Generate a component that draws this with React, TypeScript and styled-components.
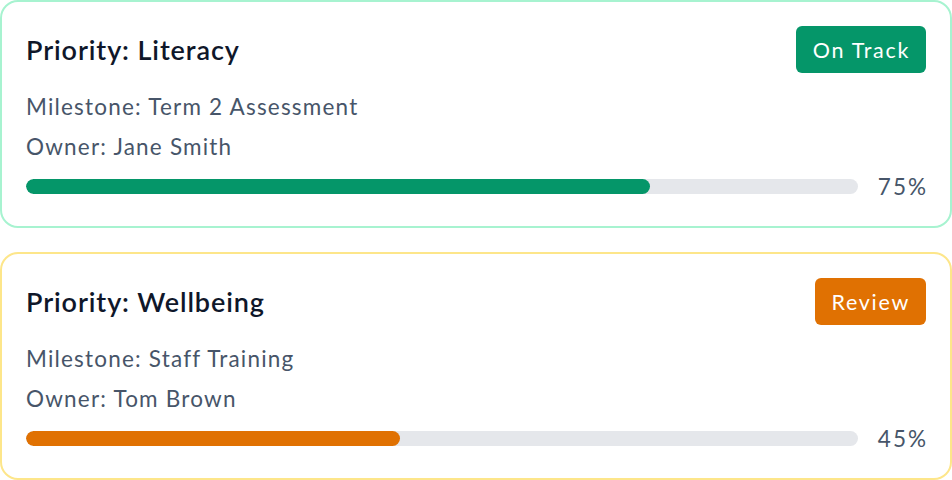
import React from "react";
import styled, { createGlobalStyle } from "styled-components";

const GlobalStyle = createGlobalStyle`
  html, body { margin: 0; padding: 0; background: #ffffff; }
  body { font-family: "Lato", "Noto Sans", sans-serif; }
  * { box-sizing: border-box; }
`;

const Page = styled.div`
  width: 952px;
  display: flex;
  flex-direction: column;
  gap: 24px;
`;

const Card = styled.div<{ $border: string }>`
  height: 228px;
  border: 2px solid ${(p) => p.$border};
  border-radius: 18px;
  background: #ffffff;
  padding: 24px;
  display: flex;
  flex-direction: column;
`;

const Header = styled.div`
  display: flex;
  align-items: center;
  justify-content: space-between;
  margin-bottom: 17px;
`;

const Title = styled.h3`
  margin: 0;
  font-size: 27px;
  font-weight: 600;
  letter-spacing: 0.9px;
  color: #0f172a;
`;

const Badge = styled.span<{ $bg: string }>`
  display: inline-flex;
  align-items: center;
  height: 47px;
  padding: 0 16px 0 17px;
  border-radius: 6px;
  background: ${(p) => p.$bg};
  color: #ffffff;
  font-size: 21.5px;
  letter-spacing: 1.7px;
`;

const Meta = styled.p`
  margin: 0 0 7px;
  font-size: 22.5px;
  line-height: 33px;
  letter-spacing: 1.2px;
  color: #475569;
`;

const ProgressRow = styled.div`
  display: flex;
  align-items: center;
  gap: 19px;
  height: 33px;
`;

const Track = styled.div`
  flex: 1;
  height: 15px;
  border-radius: 999px;
  background: #e5e7eb;
  overflow: hidden;
`;

const Fill = styled.div<{ $color: string }>`
  height: 100%;
  border-radius: 999px;
  background: ${(p) => p.$color};
`;

const Percent = styled.span`
  font-size: 22.5px;
  letter-spacing: 2px;
  margin-right: -2px;
  color: #475569;
  min-width: 51px;
  text-align: right;
`;

type Item = {
  title: string;
  milestone: string;
  owner: string;
  status: string;
  pct: number;
  color: string;
  border: string;
};

const items: Item[] = [
  {
    title: "Priority: Literacy",
    milestone: "Term 2 Assessment",
    owner: "Jane Smith",
    status: "On Track",
    pct: 75,
    color: "#059669",
    border: "#a7f3d0",
  },
  {
    title: "Priority: Wellbeing",
    milestone: "Staff Training",
    owner: "Tom Brown",
    status: "Review",
    pct: 45,
    color: "#e07102",
    border: "#fde68a",
  },
];

export default function App() {
  return (
    <>
      <GlobalStyle />
      <Page>
        {items.map((it) => (
          <Card key={it.title} $border={it.border}>
            <Header>
              <Title>{it.title}</Title>
              <Badge $bg={it.color}>{it.status}</Badge>
            </Header>
            <Meta>Milestone: {it.milestone}</Meta>
            <Meta>Owner: {it.owner}</Meta>
            <ProgressRow>
              <Track>
                <Fill $color={it.color} style={{ width: `${it.pct}%` }} />
              </Track>
              <Percent>{it.pct}%</Percent>
            </ProgressRow>
          </Card>
        ))}
      </Page>
    </>
  );
}
